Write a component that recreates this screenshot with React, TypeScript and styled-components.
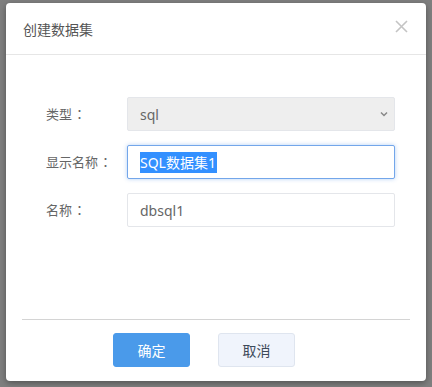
import React from "react";
import styled, { createGlobalStyle } from "styled-components";

const Global = createGlobalStyle`
  html, body { margin: 0; padding: 0; }
  body {
    background: #7f7f7f;
    font-family: "Noto Sans CJK SC", "Noto Sans", sans-serif;
  }
`;

const Page = styled.div`
  min-height: 387px;
  box-sizing: border-box;
  padding: 3px 6px 6px 6px;
  background: #7f7f7f;
`;

const Dialog = styled.div`
  width: 420px;
  height: 378px;
  background: #fff;
  border-radius: 4px;
  box-shadow: 0 2px 6px rgba(0, 0, 0, 0.35);
  display: flex;
  flex-direction: column;
  box-sizing: border-box;
`;

const Header = styled.div`
  height: 51px;
  border-bottom: 1px solid #e6e6e6;
  display: flex;
  align-items: center;
  justify-content: space-between;
  padding: 3px 17px 0 17px;
  box-sizing: content-box;
  margin-top: -3px;
`;

const Title = styled.div`
  font-size: 14px;
  color: #555;
`;

const Close = styled.button`
  border: none;
  background: none;
  padding: 0;
  margin-right: 1px;
  margin-top: -4px;
  width: 13px;
  height: 13px;
  display: flex;
  cursor: pointer;
`;

const Body = styled.div`
  flex: 1;
  padding: 42px 31px 0 40px;
  display: grid;
  grid-template-columns: 81px 1fr;
  grid-auto-rows: 34px;
  row-gap: 14px;
  align-content: start;
`;

const Label = styled.div`
  font-size: 13px;
  color: #666;
  display: flex;
  align-items: center;
  padding-bottom: 1px;
`;

const Colon = styled.span`
  font-family: "Noto Sans CJK TC", sans-serif;
  margin-left: 1px;
`;

const Field = styled.div<{ $variant?: "select" | "focus" | "plain" }>`
  box-sizing: border-box;
  height: 34px;
  border-radius: 2px;
  border: 1px solid
    ${(p) => (p.$variant === "focus" ? "#73a6ea" : "#e4e6ea")};
  background: ${(p) => (p.$variant === "select" ? "#eeeeee" : "#fff")};
  box-shadow: ${(p) =>
    p.$variant === "focus" ? "0 0 4px rgba(90, 150, 230, 0.45)" : "none"};
  display: flex;
  align-items: center;
  justify-content: space-between;
  padding: 0 6px 0 12px;
  font-family: "Noto Sans", "Noto Sans CJK SC", sans-serif;
  font-size: 14px;
  color: #666;
`;

const Selected = styled.span`
  background: #3390ff;
  color: #fff;
  font-family: "Noto Sans", "Noto Sans CJK SC", sans-serif;
  line-height: 21px;
  padding-right: 1px;
`;

const Footer = styled.div`
  margin: 0 16px;
  border-top: 1px solid #d4d4d4;
  padding: 13px 0 14px 91px;
  display: flex;
  gap: 28px;
`;

const Button = styled.button<{ $primary?: boolean }>`
  width: 77px;
  height: 34px;
  box-sizing: border-box;
  border-radius: 3px;
  border: 1px solid ${(p) => (p.$primary ? "#4a9aea" : "#dfe5ef")};
  background: ${(p) => (p.$primary ? "#4a9aea" : "#f0f4fc")};
  color: ${(p) => (p.$primary ? "#fff" : "#3d4a5a")};
  font-family: "Noto Sans CJK SC", sans-serif;
  font-size: 14px;
  padding: 0;
  cursor: pointer;
`;

export default function App() {
  return (
    <>
      <Global />
      <Page>
        <Dialog>
          <Header>
            <Title>创建数据集</Title>
            <Close aria-label="close">
              <svg width="13" height="13" viewBox="0 0 13 13">
                <path
                  d="M1 1 L12 12 M12 1 L1 12"
                  stroke="#c4c4c4"
                  strokeWidth="1.6"
                  fill="none"
                />
              </svg>
            </Close>
          </Header>
          <Body>
            <Label>
              类型<Colon>：</Colon>
            </Label>
            <Field $variant="select">
              <span>sql</span>
              <svg width="8" height="6" viewBox="0 0 8 6">
                <path
                  d="M1 1.5 L4 4.5 L7 1.5"
                  stroke="#888"
                  strokeWidth="1.5"
                  fill="none"
                />
              </svg>
            </Field>
            <Label>
              显示名称<Colon>：</Colon>
            </Label>
            <Field $variant="focus">
              <Selected>SQL数据集1</Selected>
            </Field>
            <Label>
              名称<Colon>：</Colon>
            </Label>
            <Field $variant="plain">
              <span>dbsql1</span>
            </Field>
          </Body>
          <Footer>
            <Button $primary>确定</Button>
            <Button>取消</Button>
          </Footer>
        </Dialog>
      </Page>
    </>
  );
}
